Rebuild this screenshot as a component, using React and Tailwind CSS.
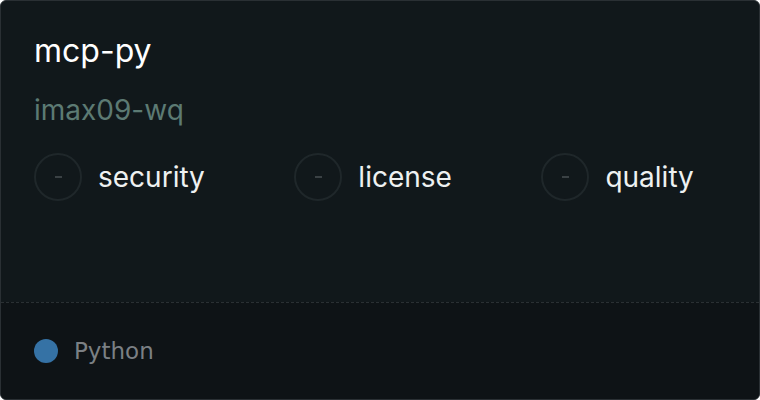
import React from 'react';

const checks = ['security', 'license', 'quality'];

// empty score: ring with a dash in the middle
const ScoreCircle = () => (
  <div className="w-12 h-12 rounded-full border-2 border-[#1f272a] flex items-center justify-center">
    <span className="w-[7px] h-[2px] bg-[#3a4144]" />
  </div>
);

const App = () => {
  return (
    <div className="w-[760px] h-[400px] bg-white">
      <div
        className="w-full h-full flex flex-col rounded-md border border-[#2a3034] bg-[#11181b] overflow-hidden"
        style={{ fontFamily: 'Inter, "Noto Sans", sans-serif' }}
      >
        <div className="flex-1 flex flex-col px-[33px] pt-[34px]">
          <h1 className="text-[32px] leading-none text-white">mcp-py</h1>
          <p className="mt-[29px] text-[28px] leading-none text-[#5c7a73]">imax09-wq</p>
          <div className="mt-[29px] flex items-center gap-[89.5px]">
            {checks.map((name) => (
              <div key={name} className="flex items-center gap-4">
                <ScoreCircle />
                <span className="text-[28px] leading-none text-[#eef1f1]">{name}</span>
              </div>
            ))}
          </div>
        </div>
        <div className="h-[97px] border-t border-dashed border-[#2a3033] bg-[#0e1316] flex items-center gap-4 px-[33px]">
          <span className="w-6 h-6 rounded-full bg-[#3572a5]" />
          <span
            className="text-[23px] text-[#7b8084]"
            style={{ fontFamily: '"DejaVu Sans", sans-serif' }}
          >
            Python
          </span>
        </div>
      </div>
    </div>
  );
};

export default App;
